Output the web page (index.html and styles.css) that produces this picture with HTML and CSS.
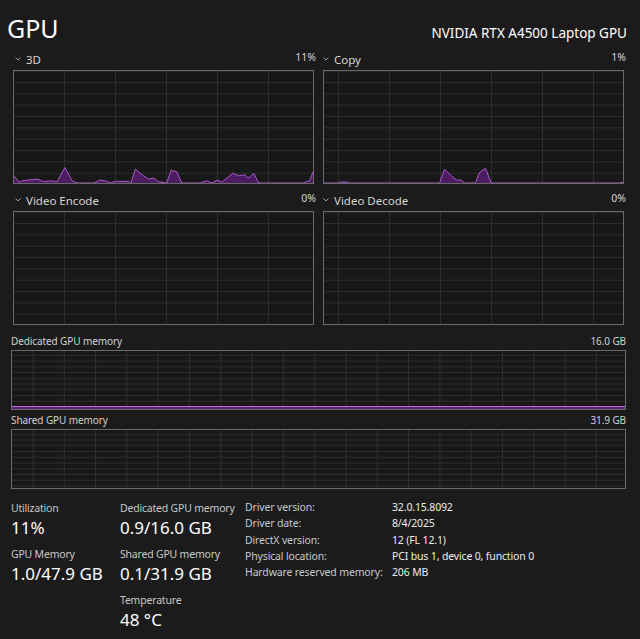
FILE: index.html
```html
<!DOCTYPE html>
<html lang="en">
<head>
<meta charset="utf-8">
<title>GPU</title>
<link rel="stylesheet" href="styles.css">
</head>
<body>
<div class="page">
  <header class="header">
    <h1 class="title">GPU</h1>
    <div class="device">NVIDIA RTX A4500 Laptop GPU</div>
  </header>

  <section class="engines">
    <div class="engine">
      <div class="engine-head">
        <span class="engine-name"><svg class="chev" viewBox="0 0 6 4"><polyline points="0.5,0.5 3,3 5.5,0.5"/></svg>3D</span>
        <span class="engine-val">11%</span>
      </div>
      <div class="chart chart-left">
        <svg class="plot" viewBox="0 0 300 114" preserveAspectRatio="none">
          <polygon class="area" points="0,114 0,106.7 5,113.3 8.3,111.7 23.3,110 30,112.7 36.7,111.7 43.3,112.7 51,98.3 58.3,111.7 63.3,114 80,114 86.7,111 93.3,112.3 96.7,114 101.7,112.3 115,112.3 117.3,114 121.7,100 130,106.7 135,110 140,109 145,112.7 153.3,114 157.7,101 163.3,102.7 168.3,114 186.7,114 193.3,111.7 198.3,114 204,111 208.3,113.3 220,104 225,106.7 231.7,105.7 235,109 240.7,104.3 245,113.3 248.3,114 290,114 296.7,111.7 300,102.7 300,114"/>
          <polyline class="line" points="0,106.7 5,113.3 8.3,111.7 23.3,110 30,112.7 36.7,111.7 43.3,112.7 51,98.3 58.3,111.7 63.3,114 80,114 86.7,111 93.3,112.3 96.7,114 101.7,112.3 115,112.3 117.3,114 121.7,100 130,106.7 135,110 140,109 145,112.7 153.3,114 157.7,101 163.3,102.7 168.3,114 186.7,114 193.3,111.7 198.3,114 204,111 208.3,113.3 220,104 225,106.7 231.7,105.7 235,109 240.7,104.3 245,113.3 248.3,114 290,114 296.7,111.7 300,102.7"/>
        </svg>
      </div>
    </div>

    <div class="engine">
      <div class="engine-head">
        <span class="engine-name engine-name-right"><svg class="chev" viewBox="0 0 6 4"><polyline points="0.5,0.5 3,3 5.5,0.5"/></svg>Copy</span>
        <span class="engine-val">1%</span>
      </div>
      <div class="chart chart-right">
        <svg class="plot" viewBox="0 0 300 114" preserveAspectRatio="none">
          <polygon class="area" points="14,114 17,113 22,113 25,114 116,114 121,100 127.7,106.7 132.7,111 137.7,111 141,114 152,114 156,103.3 162,99 167.7,114 297,114 299,113 300,114"/>
          <polyline class="line" points="0,114 14,114 17,113 22,113 25,114 116,114 121,100 127.7,106.7 132.7,111 137.7,111 141,114 152,114 156,103.3 162,99 167.7,114 297,114 299,113 300,114"/>
        </svg>
      </div>
    </div>

    <div class="engine">
      <div class="engine-head">
        <span class="engine-name"><svg class="chev" viewBox="0 0 6 4"><polyline points="0.5,0.5 3,3 5.5,0.5"/></svg>Video Encode</span>
        <span class="engine-val">0%</span>
      </div>
      <div class="chart chart-left"></div>
    </div>

    <div class="engine">
      <div class="engine-head">
        <span class="engine-name engine-name-right"><svg class="chev" viewBox="0 0 6 4"><polyline points="0.5,0.5 3,3 5.5,0.5"/></svg>Video Decode</span>
        <span class="engine-val">0%</span>
      </div>
      <div class="chart chart-right"></div>
    </div>
  </section>

  <section class="memory">
    <div class="mem-head"><span>Dedicated GPU memory</span><span>16.0 GB</span></div>
    <div class="mem-chart mem-dedicated"><div class="mem-fill"></div></div>
    <div class="mem-head"><span>Shared GPU memory</span><span>31.9 GB</span></div>
    <div class="mem-chart"></div>
  </section>

  <section class="stats">
    <div class="stat-col stat-col-1">
      <div class="stat"><div class="stat-label">Utilization</div><div class="stat-value">11%</div></div>
      <div class="stat"><div class="stat-label">GPU Memory</div><div class="stat-value">1.0/47.9 GB</div></div>
    </div>
    <div class="stat-col stat-col-2">
      <div class="stat"><div class="stat-label">Dedicated GPU memory</div><div class="stat-value">0.9/16.0 GB</div></div>
      <div class="stat"><div class="stat-label">Shared GPU memory</div><div class="stat-value">0.1/31.9 GB</div></div>
      <div class="stat"><div class="stat-label">Temperature</div><div class="stat-value">48 °C</div></div>
    </div>
    <dl class="props">
      <dt>Driver version:</dt><dd>32.0.15.8092</dd>
      <dt>Driver date:</dt><dd>8/4/2025</dd>
      <dt>DirectX version:</dt><dd>12 (FL 12.1)</dd>
      <dt>Physical location:</dt><dd>PCI bus 1, device 0, function 0</dd>
      <dt>Hardware reserved memory:</dt><dd>206 MB</dd>
    </dl>
  </section>
</div>
</body>
</html>
```

FILE: styles.css
```css
* { box-sizing: border-box; }

html, body {
  margin: 0;
  padding: 0;
  background: #1b1b1b;
}

body {
  color: #ffffff;
  font-family: "Noto Sans", "Open Sans", sans-serif;
  width: 640px;
  height: 639px;
  overflow: hidden;
}

.page {
  display: flex;
  flex-direction: column;
}

/* Header */
.header {
  display: flex;
  justify-content: space-between;
  align-items: baseline;
  height: 49px;
  padding: 13px 13px 0 7px;
}

.title {
  margin: 0;
  font-size: 25px;
  font-weight: 400;
  line-height: 30px;
  color: #ffffff;
}

.device {
  font-size: 13.5px;
  color: #ffffff;
}

/* Engine graphs */
.engines {
  display: grid;
  grid-template-columns: 1fr 1fr;
  column-gap: 7px;
  row-gap: 6px;
  padding: 0 14px 0 13px;
}

.engine-head {
  display: flex;
  justify-content: space-between;
  align-items: baseline;
  height: 21px;
  line-height: 17px;
  padding-bottom: 4px;
}

.engine-name {
  display: flex;
  align-items: center;
  font-size: 11.5px;
  color: #d4d4d4;
  padding-left: 2px;
}

.engine-name-right {
  padding-left: 0;
}

.chev {
  width: 6px;
  height: 4px;
  margin-right: 5px;
  fill: none;
  stroke: #9a9a9a;
  stroke-width: 1;
}

.engine-val {
  font-size: 10.5px;
  color: #d4d4d4;
}

.chart {
  width: calc(100% - 2px);
  height: 114px;
  border: 1px solid #6a6a6a;
  background-color: #181818;
  background-image:
    linear-gradient(to right, #2e2e2e 1px, transparent 1px),
    linear-gradient(to bottom, #2e2e2e 1px, transparent 1px);
  background-size: 51px 100%, 100% 11.35px;
  background-repeat: repeat;
}

.chart-left {
  background-position: 50px 0, 0 11px;
}

.chart-right {
  background-position: 14px 0, 0 11px;
}

.plot {
  display: block;
  width: 100%;
  height: 100%;
}

.area {
  fill: #4d1b60;
}

.line {
  fill: none;
  stroke: #a95ccb;
  stroke-width: 1;
  vector-effect: non-scaling-stroke;
}

/* Memory graphs */
.memory {
  display: flex;
  flex-direction: column;
  padding: 9px 14px 0 11px;
}

.mem-head {
  display: flex;
  justify-content: space-between;
  height: 16px;
  line-height: 14px;
  padding-bottom: 2px;
  font-size: 10px;
  color: #d0d0d0;
  letter-spacing: -0.1px;
}

.mem-head + .mem-chart + .mem-head {
  margin-top: 3px;
}

.mem-chart {
  height: 60px;
  border: 1px solid #6a6a6a;
  background-color: #181818;
  background-image:
    linear-gradient(to right, #2e2e2e 1px, transparent 1px),
    linear-gradient(to bottom, #2e2e2e 1px, transparent 1px);
  background-size: 31.3px 100%, 100% 5.75px;
  background-position: 20.5px 0, 0 3.8px;
  display: flex;
  flex-direction: column;
  justify-content: flex-end;
}

.mem-fill {
  height: 3px;
  border-top: 1px solid #c06fd8;
  background: #5a2470;
}

/* Stats */
.stats {
  display: flex;
  align-items: flex-start;
  padding: 11px 0 0 11px;
}

.stat-col-1 {
  flex: none;
  width: 109px;
}

.stat-col-2 {
  flex: none;
  width: 125px;
}

.stat {
  margin-bottom: 7px;
}

.stat-label {
  font-size: 10.5px;
  line-height: 16px;
  color: #c8c8c8;
  white-space: nowrap;
  letter-spacing: -0.2px;
}

.stat-value {
  font-size: 17px;
  line-height: 23px;
  color: #ffffff;
  white-space: nowrap;
}

.props {
  flex: none;
  display: grid;
  grid-template-columns: 147px auto;
  grid-auto-rows: 16.3px;
  margin: -1px 0 0 0;
  font-size: 10.5px;
  line-height: 16.3px;
  letter-spacing: -0.15px;
  white-space: nowrap;
}

.props dt {
  color: #c8c8c8;
}

.props dd {
  margin: 0;
  color: #ececec;
}
```
